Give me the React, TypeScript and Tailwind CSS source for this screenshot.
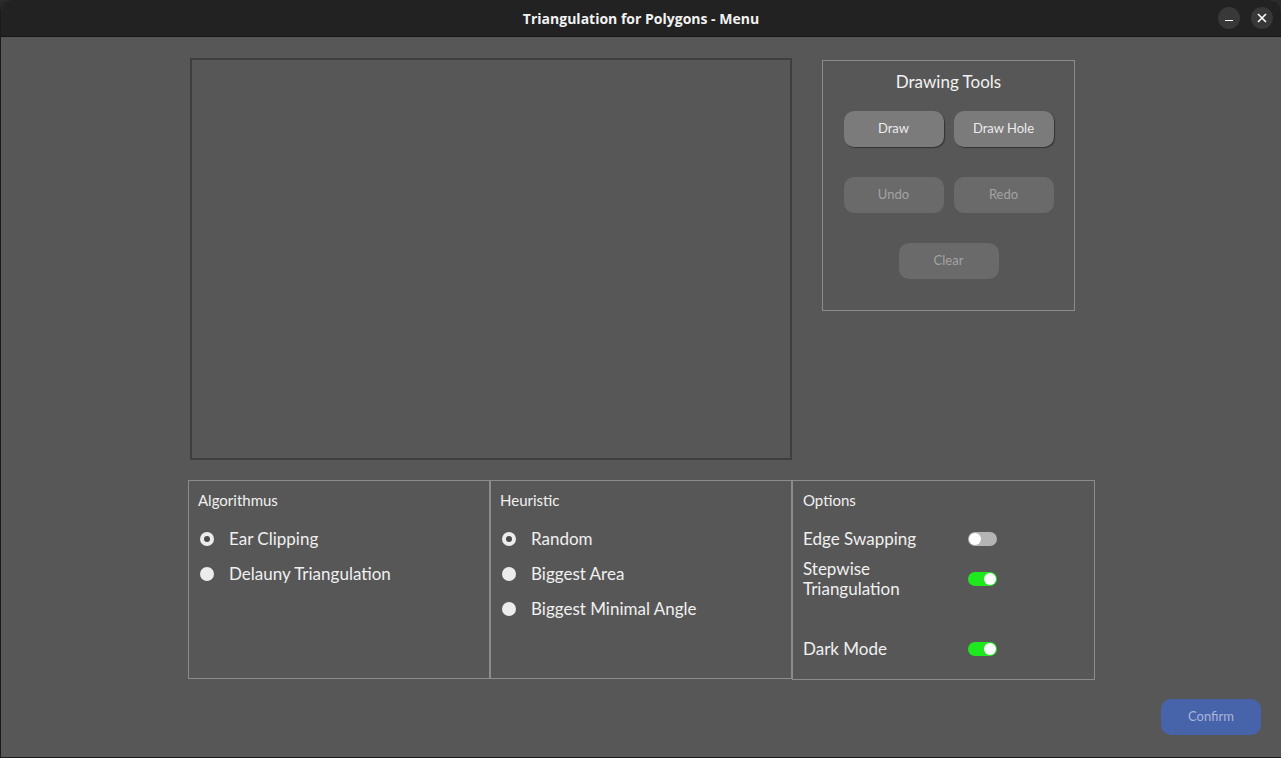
import React from "react";

const font = { fontFamily: "Lato, 'Open Sans', sans-serif" };

function Radio({ checked, label }: { checked?: boolean; label: string }) {
  return (
    <div className="flex h-[35px] items-center">
      <div className="ml-[2px] flex h-[14px] w-[14px] items-center justify-center rounded-full bg-[#ececec]">
        {checked && <div className="h-[6px] w-[6px] rounded-full bg-[#4a4a4a]" />}
      </div>
      <span className="ml-[15px] text-[17px] leading-[20px] text-[#f0f0f0]">{label}</span>
    </div>
  );
}

function Toggle({ on }: { on?: boolean }) {
  return (
    <div
      className={
        "flex h-[14px] w-[29px] items-center rounded-full px-[1px] " +
        (on ? "justify-end bg-[#1ee81e]" : "justify-start bg-[#b4b4b4]")
      }
    >
      <div className="h-[12px] w-[12px] rounded-full bg-white" />
    </div>
  );
}

function ToolButton({ label, enabled }: { label: string; enabled?: boolean }) {
  return (
    <div
      className={
        "flex h-[36px] w-[100px] items-center justify-center rounded-[10px] text-[13px] " +
        (enabled
          ? "bg-[#7b7b7b] text-[#ececec] shadow-[1px_1px_1px_#333]"
          : "bg-[#6a6a6a] text-[#a3a3a3]")
      }
    >
      {label}
    </div>
  );
}

export default function App() {
  return (
    <div className="h-[758px] w-[1281px] overflow-hidden bg-[#2a2a2a]" style={font}>
      <div className="flex h-full w-full flex-col overflow-hidden rounded-t-[11px] border-l border-b border-[#1c1c1c] bg-[#575757]">
        {/* title bar */}
        <div className="relative flex h-[37px] shrink-0 items-center justify-center border-b border-[#161616] bg-[#222222]">
          <span
            className="text-[14px] font-bold text-[#f2f2f2]"
            style={{ fontFamily: "'Open Sans', Lato, sans-serif" }}
          >
            Triangulation for Polygons - Menu
          </span>
          <div className="absolute right-[8px] top-[7px] flex gap-[11px]">
            <div className="flex h-[22px] w-[22px] items-center justify-center rounded-full bg-[#383838]">
              <div className="mt-[5px] h-[1.5px] w-[8px] bg-white" />
            </div>
            <div className="flex h-[22px] w-[22px] items-center justify-center rounded-full bg-[#383838]">
              <svg width="10" height="10" viewBox="0 0 10 10">
                <path d="M1 1L9 9M9 1L1 9" stroke="white" strokeWidth="1.6" />
              </svg>
            </div>
          </div>
        </div>

        {/* top row */}
        <div className="flex items-start pl-[189px] pt-[21px]">
          <div className="h-[402px] w-[602px] border-2 border-[#3e3e3e]" />
          <div className="ml-[30px] mt-[2px] flex h-[251px] w-[253px] flex-col items-center border border-[#8c8c8c]">
            <div className="mt-[10px] text-[17px] leading-[22px] text-[#f2f2f2]">Drawing Tools</div>
            <div className="mt-[18px] flex gap-[10px]">
              <ToolButton label="Draw" enabled />
              <ToolButton label="Draw Hole" enabled />
            </div>
            <div className="mt-[30px] flex gap-[10px]">
              <ToolButton label="Undo" />
              <ToolButton label="Redo" />
            </div>
            <div className="mt-[30px] flex">
              <ToolButton label="Clear" />
            </div>
          </div>
        </div>

        {/* bottom row */}
        <div className="mt-[20px] flex pl-[187px]">
          <div className="h-[199px] w-[302px] border border-[#8c8c8c] pl-[9px] pt-[9px]">
            <div className="text-[15px] leading-[20px] text-[#f0f0f0]">Algorithmus</div>
            <div className="mt-[11px]">
              <Radio checked label="Ear Clipping" />
              <Radio label="Delauny Triangulation" />
            </div>
          </div>
          <div className="h-[199px] w-[302px] border border-[#8c8c8c] pl-[9px] pt-[9px]">
            <div className="text-[15px] leading-[20px] text-[#f0f0f0]">Heuristic</div>
            <div className="mt-[11px]">
              <Radio checked label="Random" />
              <Radio label="Biggest Area" />
              <Radio label="Biggest Minimal Angle" />
            </div>
          </div>
          <div className="h-[200px] w-[303px] border border-[#8c8c8c] pl-[10px] pt-[9px]">
            <div className="text-[15px] leading-[20px] text-[#f0f0f0]">Options</div>
            <div className="mt-[11px] text-[17px] leading-[20px] text-[#f0f0f0]">
              <div className="flex h-[35px] items-center">
                <span className="w-[165px]">Edge Swapping</span>
                <Toggle />
              </div>
              <div className="flex h-[45px] items-center">
                <span className="w-[165px]">
                  Stepwise
                  <br />
                  Triangulation
                </span>
                <Toggle on />
              </div>
              <div className="mt-[30px] flex h-[35px] items-center">
                <span className="w-[165px]">Dark Mode</span>
                <Toggle on />
              </div>
            </div>
          </div>
        </div>

        {/* confirm */}
        <div className="mt-[19px] flex justify-end pr-[20px]">
          <div className="flex h-[36px] w-[100px] items-center justify-center rounded-[10px] bg-[#4763aa] text-[13px] text-[#aab5da]">
            Confirm
          </div>
        </div>
      </div>
    </div>
  );
}
